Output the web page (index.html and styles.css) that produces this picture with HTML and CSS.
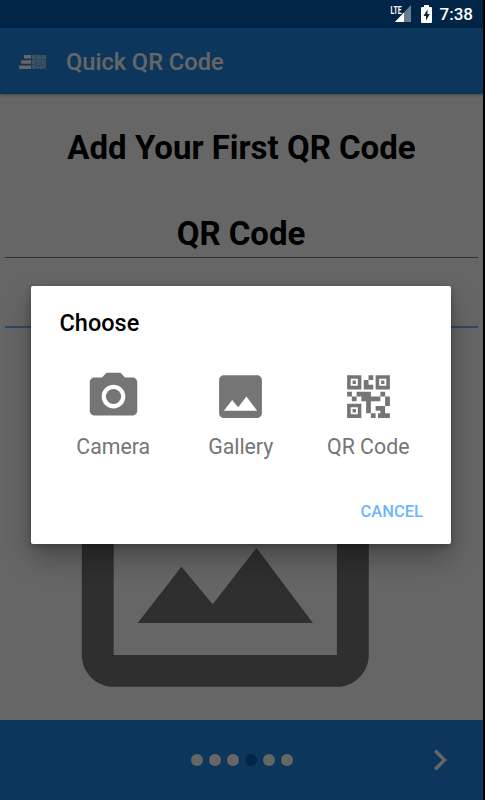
FILE: index.html
```html
<!DOCTYPE html>
<html lang="en">
<head>
  <meta charset="UTF-8">
  <title>Quick QR Code</title>
  <link rel="stylesheet" href="styles.css">
</head>
<body>

  <div class="app">
    <header class="status-bar"></header>

    <nav class="toolbar">
      <svg class="logo" viewBox="0 0 27 14">
        <path d="M5 0h7v3.5H5zM2 5.2h10v3.5H2zM0 10.5h12V14H0z"/>
        <path class="logo-back" d="M12.500 0H27v14H12.500z"/>
        <path class="logo-code" d="M13 0h4v4h-4zM18 0h4v4h-4zM23 0h4v4h-4zM13 5h3v4h-3zM17 5h5v2h-5zM23 5h2v4h-2zM26 5h1v5h-1zM18 8h4v2h-4zM13 10h4v4h-4zM18 11h2v3h-2zM21 11h2v3h-2zM24 10h2v3h-2zM26 12h1v2h-1z"/>
      </svg>
      <span class="toolbar-title">Quick QR Code</span>
    </nav>

    <main class="content">
      <h1>Add Your First QR Code</h1>
      <div class="field">QR Code</div>
      <div class="field focused"></div>
      <svg class="photo" viewBox="0 0 24 24">
        <path d="M19 5v14H5V5h14m0-2H5c-1.1 0-2 .9-2 2v14c0 1.1.9 2 2 2h14c1.1 0 2-.9 2-2V5c0-1.1-.9-2-2-2z"/>
        <path d="M13.96 12.29l-2.75 3.54-1.96-2.36L6.5 17h11z"/>
      </svg>
    </main>

    <footer class="bottom-bar">
      <div class="dots">
        <span class="dot"></span>
        <span class="dot"></span>
        <span class="dot"></span>
        <span class="dot active"></span>
        <span class="dot"></span>
        <span class="dot"></span>
      </div>
      <svg class="next" viewBox="0 0 24 24">
        <path d="M10 6L8.59 7.41 13.17 12l-4.58 4.59L10 18l6-6z"/>
      </svg>
    </footer>

    <div class="overlay">
      <div class="system-icons">
        <svg class="signal" viewBox="0 0 22 18">
          <path class="signal-off" d="M21 0v17H5z"/>
          <path d="M14 7.500V17H5z"/>
          <path class="signal-gap" d="M0 0h12.300v9H0z"/>
          <text x="0.500" y="8.500" textLength="11" lengthAdjust="spacingAndGlyphs">LTE</text>
        </svg>
        <svg class="battery" viewBox="0 0 11 18">
          <path d="M3 0h5v2h2q1 0 1 1v14q0 1-1 1H1q-1 0-1-1V3q0-1 1-1h2z"/>
          <path class="bolt" d="M6.500 4.500L2.500 11h2.500v4.500L8.800 9H6.500z"/>
        </svg>
        <span class="clock">7:38</span>
      </div>

      <div class="dialog">
        <h2>Choose</h2>
        <div class="options">
          <div class="option">
            <svg viewBox="0 0 24 24">
              <circle cx="12" cy="12" r="3.200"/>
              <path d="M9 2L7.170 4H4c-1.100 0-2 .9-2 2v12c0 1.100.9 2 2 2h16c1.100 0 2-.9 2-2V6c0-1.100-.9-2-2-2h-3.170L15 2H9zm3 15c-2.760 0-5-2.240-5-5s2.240-5 5-5 5 2.240 5 5-2.240 5-5 5z"/>
            </svg>
            <span>Camera</span>
          </div>
          <div class="option">
            <svg viewBox="0 0 24 24">
              <path d="M21 19V5c0-1.100-.9-2-2-2H5c-1.100 0-2 .9-2 2v14c0 1.100.9 2 2 2h14c1.100 0 2-.9 2-2zM8.500 13.500l2.500 3.010L14.500 12l4.500 6H5l3.500-4.500z"/>
            </svg>
            <span>Gallery</span>
          </div>
          <div class="option">
            <svg viewBox="-3 -3 24 24">
              <path fill-rule="evenodd" d="M0 0h6v6H0zM1.500 1.500v3h3v-3zM12 0h6v6h-6zM13.500 1.500v3h3v-3zM0 12h6v6H0zM1.500 13.500v3h3v-3z"/>
              <path d="M2.300 2.300h1.400v1.400H2.300zM14.300 2.300h1.400v1.400h-1.400zM2.300 14.300h1.400v1.400H2.300z"/>
              <path d="M9 0h2v2H9zM7 2h2v2h2v2H7zM0 7h2v2H0zM2 9h2v2H2zM4 7h6v2h4v2h-4v5H8v-5H6V9H4zM14 7h2v2h-2zM16 9h2v4h-2zM12 13h4v3h2v2h-5v-2h1v-1h-2zM10 16h2v2h-2z"/>
            </svg>
            <span>QR Code</span>
          </div>
        </div>
        <button class="cancel">CANCEL</button>
      </div>
    </div>
  </div>

</body>
</html>
```
FILE: styles.css
```css
* {
  box-sizing: border-box;
}

body {
  margin: 0;
  background: #000;
  font-family: Roboto, sans-serif;
}

.app {
  position: relative;
  display: flex;
  flex-direction: column;
  width: 483px;
  height: 800px;
  overflow: hidden;
  background: #fff;
}

.status-bar {
  height: 28px;
  background: #005cb2;
}

.toolbar {
  display: flex;
  align-items: center;
  height: 66px;
  padding: 2px 19px 0;
  gap: 20px;
  background: #1e88e5;
  box-shadow: 0 1px 3px rgba(0, 0, 0, 0.35);
  color: #fff;
}

.logo {
  width: 27px;
  height: 14px;
  fill: #fff;
}

.logo-back {
  opacity: 0.3;
}

.logo-code {
  opacity: 0.4;
}

.toolbar-title {
  font-size: 23.6px;
  font-weight: 500;
}

.content {
  display: flex;
  flex-direction: column;
  flex: 1;
  min-height: 0;
  padding: 34px 5px 0;
}

h1, .field {
  flex: none;
  margin: 0;
  font-size: 33px;
  line-height: 40px;
  font-weight: bold;
  text-align: center;
  color: #000;
}

.field {
  height: 44px;
  margin-top: 46px;
  padding-right: 1px;
  border-bottom: 1px solid #757575;
}

.field.focused {
  height: 50px;
  margin-top: 20px;
  border-bottom: 2px solid #6ab7ff;
}

.photo {
  flex: none;
  width: 382.6px;
  height: 382.6px;
  margin: 24px 0 0 29.2px;
  fill: #757575;
}

.bottom-bar {
  z-index: 1;
  display: grid;
  grid-template-columns: 1fr auto 1fr;
  align-items: center;
  height: 80.5px;
  padding: 1px 28px 0 28px;
  background: #1e88e5;
}

.dots {
  display: flex;
  grid-column: 2;
  gap: 6px;
}

.dot {
  width: 12px;
  height: 12px;
  border-radius: 50%;
  background: #fff;
}

.dot.active {
  background: #005cb2;
}

.next {
  justify-self: end;
  width: 42px;
  height: 42px;
  margin-right: -6px;
  fill: #fff;
}

/* dimmed layer with the dialog on top */
.overlay {
  position: absolute;
  inset: 0;
  z-index: 2;
  display: flex;
  flex-direction: column;
  align-items: center;
  background: rgba(0, 0, 0, 0.6);
}

.system-icons {
  display: flex;
  align-items: center;
  align-self: flex-end;
  height: 28px;
  padding: 0 10px 0 0;
  color: #fff;
}

.signal {
  width: 22px;
  height: 18px;
  margin-right: 9px;
  fill: #fff;
}

.signal text {
  font-size: 11px;
  font-weight: bold;
}

.signal-off {
  opacity: 0.4;
}

.signal .signal-gap {
  fill: #002547;
}

.battery {
  width: 11px;
  height: 18px;
  margin-right: 8px;
  fill: #fff;
}

.bolt {
  fill: #002547;
}

.clock {
  font-size: 17px;
  font-weight: 500;
}

.dialog {
  display: flex;
  flex-direction: column;
  width: 420px;
  height: 258px;
  margin: 258px 1px 0 0;
  padding: 21px 28px 17px 28.500px;
  border-radius: 2px;
  background: #fff;
  box-shadow: 0 14px 28px rgba(0, 0, 0, 0.3), 0 2px 6px rgba(0, 0, 0, 0.25);
}

h2 {
  margin: 0;
  font-size: 23.5px;
  line-height: 32px;
  font-weight: 500;
  color: #000;
}

.options {
  display: grid;
  grid-template-columns: repeat(3, 127.5px);
  margin: 29px -10px 0;
}

.option {
  display: flex;
  flex-direction: column;
  align-items: center;
  font-size: 21.3px;
  line-height: 28px;
  color: #757575;
}

.option svg {
  width: 57px;
  height: 57px;
  margin-bottom: 8px;
  fill: #757575;
}

.cancel {
  align-self: flex-end;
  margin-top: auto;
  padding: 0;
  border: none;
  background: none;
  font-family: inherit;
  font-size: 16.5px;
  line-height: 30px;
  font-weight: 500;
  color: #6ab7ff;
}
```
